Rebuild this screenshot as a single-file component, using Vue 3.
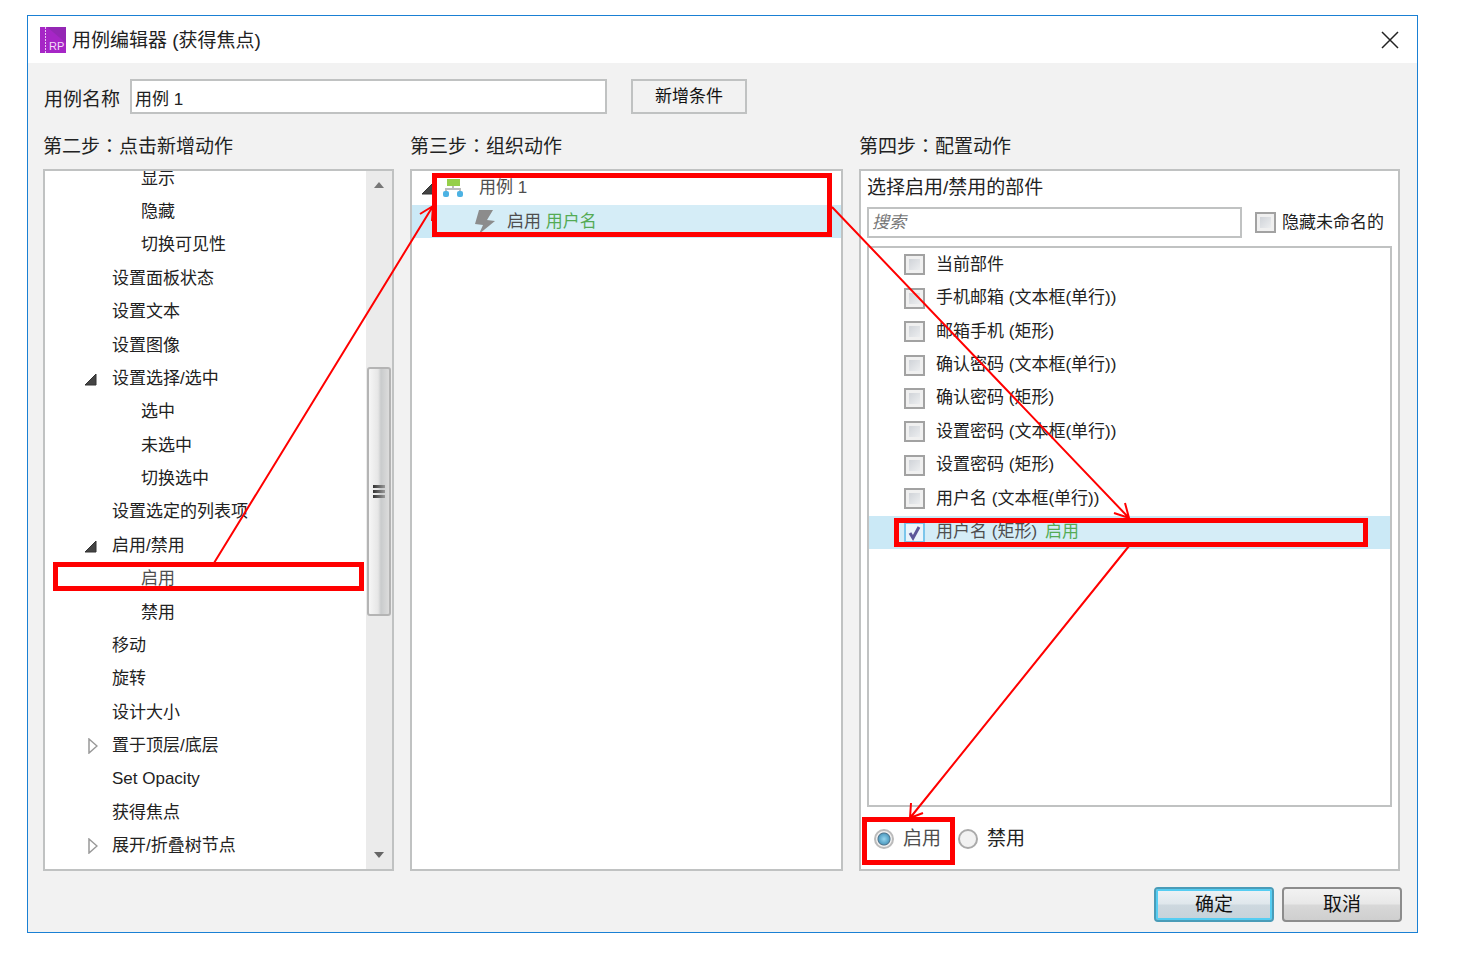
<template>
  <div class="page">
    <div class="dialog" role="dialog" aria-labelledby="dialog-title">
      <header class="titlebar">
        <svg class="logo" width="26" height="26" viewBox="0 0 26 26">
          <rect width="26" height="26" fill="#a626c6" />
          <path d="M7 0H26V16Z" fill="#9427b4" />
          <path d="M5.5 0V26" stroke="#e9c8f2" stroke-width="1" stroke-dasharray="2 1" />
          <text x="9" y="23" class="logo-text">RP</text>
        </svg>
        <h1 id="dialog-title">用例编辑器 (获得焦点)</h1>
        <button class="close" type="button" aria-label="关闭">
          <svg width="18" height="18" viewBox="0 0 18 18">
            <path d="M1 1L17 17M17 1L1 17" stroke="#222" stroke-width="1.5" fill="none" />
          </svg>
        </button>
      </header>

      <div class="name-row">
        <label for="case-name">用例名称</label>
        <input id="case-name" v-model="caseName" class="field" type="text" />
        <button class="flat-btn" type="button">新增条件</button>
      </div>

      <main class="columns">
        <section class="column">
          <h2>第二步<span class="colon">：</span>点击新增动作</h2>
          <div class="panel actions">
            <ul class="tree">
              <li v-for="item in actions" :key="item.id" :class="{ child: item.child }">
                <span v-if="!item.child" class="toggle-slot">
                  <button v-if="item.state" class="toggle" type="button" :aria-label="item.label">
                    <svg v-if="item.state === 'open'" width="14" height="14" viewBox="0 0 14 14">
                      <path d="M12 2V13H1Z" fill="#444" stroke="#333" />
                    </svg>
                    <svg v-else class="closed" width="10" height="16" viewBox="0 0 10 16">
                      <path d="M1 1L9 8L1 15Z" fill="#fff" stroke="#999" stroke-width="1.5" />
                    </svg>
                  </button>
                </span>
                <button class="action" type="button">{{ item.label }}</button>
              </li>
            </ul>
            <div class="scrollbar">
              <button class="scroll-btn" type="button" aria-label="向上滚动">
                <svg width="12" height="8" viewBox="0 0 12 8"><path d="M1 7L6 1L11 7Z" fill="#777" /></svg>
              </button>
              <div class="gap-above"></div>
              <div class="thumb"><i></i><i></i><i></i></div>
              <div class="gap-below"></div>
              <button class="scroll-btn" type="button" aria-label="向下滚动">
                <svg width="12" height="8" viewBox="0 0 12 8"><path d="M1 1H11L6 7Z" fill="#666" /></svg>
              </button>
            </div>
          </div>
        </section>

        <section class="column">
          <h2>第三步<span class="colon">：</span>组织动作</h2>
          <div class="panel organize">
            <div class="case-row">
              <svg width="14" height="14" viewBox="0 0 14 14">
                <path d="M12 2V13H1Z" fill="#444" stroke="#333" />
              </svg>
              <svg class="case-icon" width="20" height="20" viewBox="0 0 20 20">
                <path d="M10 7V11M3 15V11H17V15" stroke="#aaa" stroke-width="2" fill="none" />
                <rect x="4" y="1" width="13" height="7" fill="#7cc41c" />
                <rect x="0" y="13" width="6" height="6" rx="2" fill="#209fdc" />
                <rect x="14" y="13" width="6" height="6" rx="2" fill="#209fdc" />
              </svg>
              <span>用例 1</span>
            </div>
            <div class="step-row">
              <svg width="20" height="24" viewBox="0 0 20 24">
                <path d="M4 0H18L12 10L20 11L4 24L8 15L0 14Z" fill="#707070" />
              </svg>
              <span>启用 <em>用户名</em></span>
            </div>
          </div>
        </section>

        <section class="column">
          <h2>第四步<span class="colon">：</span>配置动作</h2>
          <div class="panel config">
            <h3>选择启用/禁用的部件</h3>
            <div class="search-row">
              <input class="field search" type="text" placeholder="搜索" aria-label="搜索" />
              <label class="hide-unnamed">
                <input v-model="hideUnnamed" type="checkbox" />
                <span>隐藏未命名的</span>
              </label>
            </div>
            <div class="widgets">
              <div class="widget-rows">
                <label
                  v-for="w in widgets"
                  :key="w.name"
                  class="widget"
                  :class="{ selected: w.checked }"
                >
                  <input v-model="w.checked" type="checkbox" />
                  <span>{{ w.name }}</span>
                  <em v-if="w.checked">启用</em>
                </label>
              </div>
            </div>
            <div class="radios">
              <label><input v-model="mode" type="radio" name="mode" value="on" />启用</label>
              <label><input v-model="mode" type="radio" name="mode" value="off" />禁用</label>
            </div>
          </div>
        </section>
      </main>

      <footer class="footer">
        <button class="glossy primary" type="button">确定</button>
        <button class="glossy" type="button">取消</button>
      </footer>
    </div>

    <!-- walkthrough marks drawn over the dialog -->
    <svg class="marks" viewBox="0 0 1467 961" preserveAspectRatio="none">
      <g class="boxes">
        <rect x="55.5" y="564.5" width="306" height="24" />
        <rect x="434.5" y="175.5" width="395" height="59" />
        <rect x="896.5" y="520.5" width="469" height="24" />
        <rect x="864.5" y="819.5" width="88" height="43" />
      </g>
      <g class="arrows">
        <path d="M214 563L433 206M420 214L433 206L432 221" />
        <path d="M832 207L1129 518M1114 513L1129 518L1125 503" />
        <path d="M1129 546L910 818M911 803L910 818L923 813" />
      </g>
    </svg>
  </div>
</template>

<script setup>
import { ref } from 'vue'

const caseName = ref('用例 1')
const hideUnnamed = ref(false)
const mode = ref('on')

const actions = [
  { id: 1, label: '显示', child: true },
  { id: 2, label: '隐藏', child: true },
  { id: 3, label: '切换可见性', child: true },
  { id: 4, label: '设置面板状态' },
  { id: 5, label: '设置文本' },
  { id: 6, label: '设置图像' },
  { id: 7, label: '设置选择/选中', state: 'open' },
  { id: 8, label: '选中', child: true },
  { id: 9, label: '未选中', child: true },
  { id: 10, label: '切换选中', child: true },
  { id: 11, label: '设置选定的列表项' },
  { id: 12, label: '启用/禁用', state: 'open' },
  { id: 13, label: '启用', child: true },
  { id: 14, label: '禁用', child: true },
  { id: 15, label: '移动' },
  { id: 16, label: '旋转' },
  { id: 17, label: '设计大小' },
  { id: 18, label: '置于顶层/底层', state: 'closed' },
  { id: 19, label: 'Set Opacity' },
  { id: 20, label: '获得焦点' },
  { id: 21, label: '展开/折叠树节点', state: 'closed' },
]

const widgets = ref([
  { name: '当前部件', checked: false },
  { name: '手机邮箱 (文本框(单行))', checked: false },
  { name: '邮箱手机 (矩形)', checked: false },
  { name: '确认密码 (文本框(单行))', checked: false },
  { name: '确认密码 (矩形)', checked: false },
  { name: '设置密码 (文本框(单行))', checked: false },
  { name: '设置密码 (矩形)', checked: false },
  { name: '用户名 (文本框(单行))', checked: false },
  { name: '用户名 (矩形)', checked: true },
])
</script>

<style>
body {
  background: #fff;
}
</style>

<style scoped>
* {
  box-sizing: border-box;
}

.page {
  position: relative;
  display: flex;
  min-height: 100vh;
  padding: 15px 49px 28px 27px;
  font-family: 'Liberation Sans', 'Noto Sans CJK SC', sans-serif;
  font-size: 17px;
  line-height: 24px;
  color: #222;
}

button,
input {
  font: inherit;
  color: inherit;
}

button {
  padding: 0;
  border: 0;
  background: none;
}

h1,
h2,
h3 {
  margin: 0;
  font-size: 19px;
  font-weight: 400;
}

em {
  font-style: normal;
  color: #2a962a;
}

.dialog {
  flex: 1;
  display: flex;
  flex-direction: column;
  border: 1px solid #1a80d4;
  background: #f2f2f2;
}

.titlebar {
  display: flex;
  align-items: center;
  height: 47px;
  padding: 0 18px 0 12px;
  background: #fff;
}

.titlebar h1 {
  flex: 1;
  padding-top: 2px;
  margin-left: 6px;
}

.logo-text {
  font-family: 'Liberation Sans', sans-serif;
  font-size: 11px;
  fill: #f3dcf8;
}

.close {
  display: flex;
}

.name-row {
  display: flex;
  align-items: center;
  margin: 16px 17px 0 16px;
}

.name-row label {
  padding-top: 6px;
  font-size: 19px;
}

.field {
  border: 2px solid #c0c2c2;
  background: #fff;
  outline: 0;
}

.name-row .field {
  width: 477px;
  height: 35px;
  margin: 0 24px 0 10px;
  padding: 2px 3px 0;
}

.flat-btn {
  width: 116px;
  height: 35px;
  border: 2px solid #c0c2c2;
  color: #111;
}

.columns {
  flex: 1;
  display: grid;
  grid-template-columns: 351fr 433fr 541fr;
  gap: 16px;
  margin: 20px 17px 0 15px;
}

.column {
  display: flex;
  flex-direction: column;
  min-width: 0;
}

.column h2 {
  height: 35px;
  line-height: 22px;
}

.colon {
  font-family: 'Noto Sans CJK TC', sans-serif;
}

.panel {
  flex: 1;
  border: 2px solid #c0c2c2;
  background: #fff;
}

.actions {
  display: flex;
  overflow: hidden;
}

.tree {
  flex: 1;
  display: flex;
  flex-direction: column;
  margin: -9px 0 6px;
  padding: 0;
  list-style: none;
}

.tree li {
  flex: 1;
  display: flex;
  align-items: center;
  padding-left: 39px;
}

.tree li.child {
  padding-left: 96px;
}

.toggle-slot {
  display: flex;
  width: 28px;
}

.toggle {
  display: flex;
}

.closed {
  margin-left: 4px;
}

.scrollbar {
  display: flex;
  flex-direction: column;
  width: 26px;
  background: #ebebeb;
}

.scroll-btn {
  display: flex;
  align-items: center;
  justify-content: center;
  height: 28px;
}

.gap-above {
  flex: 169;
}

.gap-below {
  flex: 227;
}

.thumb {
  flex: 247;
  display: flex;
  flex-direction: column;
  align-items: center;
  justify-content: center;
  gap: 2px;
  margin: 0 1px;
  border: 2px solid #b4b4b4;
  border-radius: 3px;
  background: linear-gradient(90deg, #f6f6f6 0%, #e6e6e6 45%, #c9cbcc 60%, #dcdcdc 100%);
}

.thumb i {
  width: 12px;
  height: 3px;
  background: linear-gradient(90deg, #333, #999);
}

.case-row,
.step-row {
  display: flex;
  align-items: center;
  height: 33px;
}

.case-row {
  padding-left: 9px;
}

.case-icon {
  margin: 0 16px 0 8px;
}

.step-row {
  gap: 12px;
  margin-top: 1px;
  padding-left: 63px;
  background: #cbe9f6;
}

.config {
  display: flex;
  flex-direction: column;
  padding: 5px 6px 18px;
}

.search-row {
  display: flex;
  align-items: center;
  margin: 7px 0 8px;
}

.search {
  flex: 1;
  min-width: 0;
  height: 31px;
  padding: 0 3px;
}

.search::placeholder {
  font-style: italic;
  color: #777;
  opacity: 1;
}

.hide-unnamed {
  display: flex;
  align-items: center;
  gap: 6px;
  margin: 0 8px 0 13px;
}

input[type='checkbox'] {
  appearance: none;
  flex: none;
  width: 21px;
  height: 21px;
  margin: 0;
  border: 2px solid #a2a2a2;
  background: linear-gradient(135deg, #c8ccd2, #f4f5f6);
  box-shadow: inset 0 0 0 3px #f0f0f0;
}

input[type='checkbox']:checked {
  border-color: #5cb8e6;
  background: url("data:image/svg+xml,%3Csvg xmlns='http://www.w3.org/2000/svg' viewBox='0 0 17 17'%3E%3Cpath d='M4 9L7 14L13 3' fill='none' stroke='%23352e80' stroke-width='3'/%3E%3C/svg%3E") #e6f3fb;
  box-shadow: none;
}

.widgets {
  flex: 1;
  border: 2px solid #c0c2c2;
}

.widget-rows {
  display: flex;
  flex-direction: column;
  height: 301px;
}

.widget {
  flex: 1;
  display: flex;
  align-items: center;
  padding-left: 35px;
}

.widget span {
  margin-left: 11px;
}

.widget em {
  margin-left: 8px;
}

.selected {
  background: #cbe9f6;
}

.radios {
  display: flex;
  gap: 17px;
  margin-top: 20px;
  padding-left: 7px;
  font-size: 19px;
}

.radios label {
  display: flex;
  align-items: center;
  gap: 9px;
}

.radios input {
  appearance: none;
  width: 20px;
  height: 20px;
  margin: 0;
  border: 2px solid #aaa;
  border-radius: 50%;
  background: #f2f2f2;
}

.radios input:checked {
  background: radial-gradient(circle at 50% 50%, #7ccbea 0, #2d8bb8 5px, #24516f 6px, #eee 7px);
}

.footer {
  display: flex;
  justify-content: flex-end;
  gap: 8px;
  margin: 16px 15px 10px;
}

.glossy {
  width: 120px;
  height: 35px;
  border: 2px solid #8c8c8c;
  border-radius: 4px;
  background: linear-gradient(#f2f2f2 0%, #e8e8e8 48%, #d8d8d8 52%, #cfcfcf 100%);
  font-size: 19px;
  color: #111;
}

.primary {
  border-color: #4a9cb8;
  box-shadow: inset 0 0 0 2px #55cdf2;
  background: linear-gradient(#eef3f6 0%, #dfe7ec 48%, #cdd8df 52%, #c6d2da 100%);
}

.marks {
  position: absolute;
  inset: 0;
  width: 100%;
  height: 100%;
  pointer-events: none;
}

.boxes rect {
  fill: rgba(255, 255, 255, 0.2);
  stroke: #f00;
  stroke-width: 5;
}

.arrows path {
  fill: none;
  stroke: #f00;
  stroke-width: 2;
}
</style>
